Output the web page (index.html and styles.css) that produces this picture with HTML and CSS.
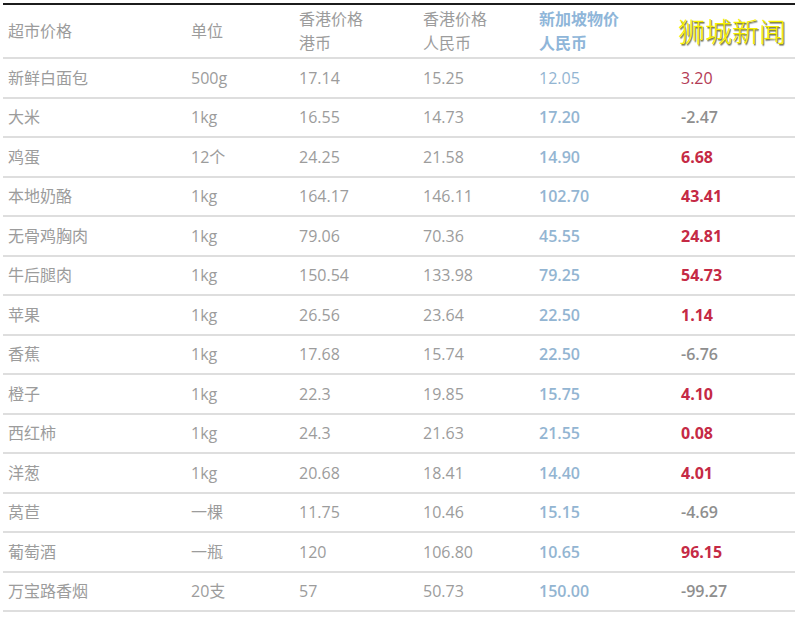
FILE: index.html
```html
<!DOCTYPE html>
<html lang="zh-CN">
<head>
<meta charset="utf-8">
<title>超市价格</title>
<link rel="stylesheet" href="styles.css">
</head>
<body>
<table class="price-table">
  <colgroup>
    <col class="c1"><col class="c2"><col class="c3"><col class="c4"><col class="c5"><col class="c6">
  </colgroup>
  <thead>
    <tr>
      <th>超市价格</th>
      <th>单位</th>
      <th>香港价格<br>港币</th>
      <th>香港价格<br>人民币</th>
      <th class="sg">新加坡物价<br><span class="sg-unit">人民币</span></th>
      <th><span class="logo">狮城新闻</span></th>
    </tr>
  </thead>
  <tbody>
    <tr><td>新鲜白面包</td><td>500g</td><td>17.14</td><td>15.25</td><td class="sg light">12.05</td><td class="pos light">3.20</td></tr>
    <tr><td>大米</td><td>1kg</td><td>16.55</td><td>14.73</td><td class="sg">17.20</td><td class="neg">-2.47</td></tr>
    <tr><td>鸡蛋</td><td>12个</td><td>24.25</td><td>21.58</td><td class="sg">14.90</td><td class="pos">6.68</td></tr>
    <tr><td>本地奶酪</td><td>1kg</td><td>164.17</td><td>146.11</td><td class="sg">102.70</td><td class="pos">43.41</td></tr>
    <tr><td>无骨鸡胸肉</td><td>1kg</td><td>79.06</td><td>70.36</td><td class="sg">45.55</td><td class="pos">24.81</td></tr>
    <tr><td>牛后腿肉</td><td>1kg</td><td>150.54</td><td>133.98</td><td class="sg">79.25</td><td class="pos">54.73</td></tr>
    <tr><td>苹果</td><td>1kg</td><td>26.56</td><td>23.64</td><td class="sg">22.50</td><td class="pos">1.14</td></tr>
    <tr><td>香蕉</td><td>1kg</td><td>17.68</td><td>15.74</td><td class="sg">22.50</td><td class="neg">-6.76</td></tr>
    <tr><td>橙子</td><td>1kg</td><td>22.3</td><td>19.85</td><td class="sg">15.75</td><td class="pos">4.10</td></tr>
    <tr><td>西红柿</td><td>1kg</td><td>24.3</td><td>21.63</td><td class="sg">21.55</td><td class="pos">0.08</td></tr>
    <tr><td>洋葱</td><td>1kg</td><td>20.68</td><td>18.41</td><td class="sg">14.40</td><td class="pos">4.01</td></tr>
    <tr><td>莴苣</td><td>一棵</td><td>11.75</td><td>10.46</td><td class="sg">15.15</td><td class="neg">-4.69</td></tr>
    <tr><td>葡萄酒</td><td>一瓶</td><td>120</td><td>106.80</td><td class="sg">10.65</td><td class="pos">96.15</td></tr>
    <tr><td>万宝路香烟</td><td>20支</td><td>57</td><td>50.73</td><td class="sg">150.00</td><td class="neg">-99.27</td></tr>
  </tbody>
</table>
</body>
</html>
```
FILE: styles.css
```css
html, body {
  margin: 0;
  padding: 0;
  background: #ffffff;
}

body {
  padding-top: 3px;
  font-family: "Open Sans", "Noto Sans CJK SC", sans-serif;
  font-size: 16px;
  color: #9c9c9c;
}

.price-table {
  margin-left: 3px;
  width: 792px;
  table-layout: fixed;
  border-collapse: collapse;
  border-top: 2px solid #1c1c1c;
}

.c1 { width: 180px; }
.c2 { width: 108px; }
.c3 { width: 124px; }
.c4 { width: 116px; }
.c5 { width: 142px; }
.c6 { width: 122px; }

.price-table th,
.price-table td {
  padding: 0 0 0 8px;
  text-align: left;
  white-space: nowrap;
  border-bottom: 2px solid #dedede;
}

.price-table th:first-child,
.price-table td:first-child {
  padding-left: 5px;
}

.price-table th {
  height: 52px;
  font-weight: 400;
  line-height: 24px;
  vertical-align: middle;
}

.price-table td {
  height: 37.5px;
  line-height: 20px;
  vertical-align: middle;
}

.price-table th.sg {
  color: #8fb6d9;
  font-weight: 600;
}

.sg-unit {
  font-weight: 700;
}

.price-table td.sg {
  color: #93b5d2;
  font-weight: 600;
}

.price-table td.pos {
  color: #c52a45;
  font-weight: 700;
}

.price-table td.neg {
  color: #8e8e8e;
  font-weight: 600;
}

.price-table td.light {
  font-weight: 400;
}

.price-table td.pos.light {
  color: #b33a55;
}

.logo {
  display: inline-block;
  margin-top: 2px;
  margin-left: -3px;
  font-family: "Noto Sans CJK SC", sans-serif;
  font-size: 27px;
  line-height: 30px;
  font-weight: 300;
  color: #f6f000;
  text-shadow: 1px 1px 0 #8a8a40, 1px 2px 1px #9a9a9a;
}
```
